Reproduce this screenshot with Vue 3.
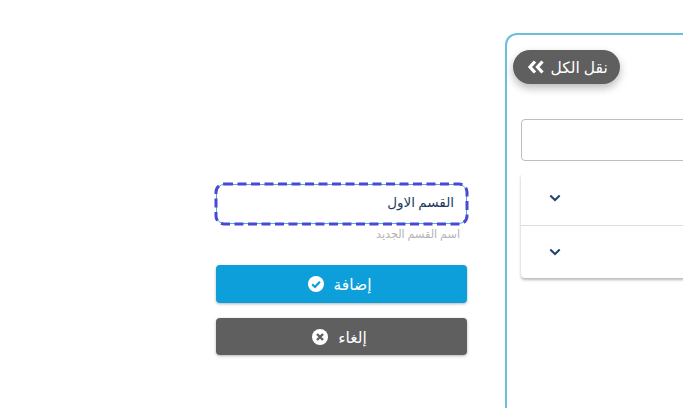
<script setup>
const items = [1, 2]
</script>

<template>
  <div class="page">
    <section class="form">
      <div class="name-field">
        <input class="name-input" dir="rtl" value="القسم الاول" aria-label="اسم القسم الجديد" />
        <svg class="focus-ring" viewBox="0 0 253 42" aria-hidden="true">
          <rect x="1" y="1" width="251" height="40" rx="8" fill="none" stroke="#4a48d4" stroke-width="3" stroke-dasharray="9 4.5" />
        </svg>
      </div>
      <p class="hint" dir="rtl">اسم القسم الجديد</p>
      <button class="btn primary" type="button">
        <svg class="btn-icon" viewBox="0 0 16 16" aria-hidden="true">
          <circle cx="8" cy="8" r="8" fill="#fff" />
          <path d="M4.2 8.2 7 11l4.9-5.2" fill="none" stroke="#0c9fda" stroke-width="2.2" />
        </svg>
        <span dir="rtl">إضافة</span>
      </button>
      <button class="btn secondary" type="button">
        <svg class="btn-icon" viewBox="0 0 16 16" aria-hidden="true">
          <circle cx="8" cy="8" r="8" fill="#fff" />
          <path d="M5 5l6 6M11 5l-6 6" fill="none" stroke="#5f5f5f" stroke-width="2.4" />
        </svg>
        <span dir="rtl">إلغاء</span>
      </button>
    </section>

    <section class="panel">
      <button class="move-all" type="button">
        <svg class="move-icon" viewBox="0 0 18 14" aria-hidden="true">
          <path d="M8 1.5 3 7l5 5.5M15.5 1.5 10.5 7l5 5.5" fill="none" stroke="#fff" stroke-width="3.2" />
        </svg>
        <span dir="rtl">نقل الكل</span>
      </button>
      <div class="search"></div>
      <div class="accordion">
        <div v-for="item in items" :key="item" class="row">
          <svg class="chevron" viewBox="0 0 12 8" aria-hidden="true">
            <path d="M1.3 1.5 6 6l4.7-4.5" fill="none" stroke="#1f4468" stroke-width="2" />
          </svg>
        </div>
      </div>
    </section>
  </div>
</template>

<style>
html, body { margin: 0; overflow: hidden; background: #fff; }
</style>

<style scoped>
.page {
  width: 683px;
  height: 408px;
  overflow: hidden;
  display: flex;
  align-items: flex-start;
  background: #fff;
  font-family: "Noto Sans", "DejaVu Sans", sans-serif;
}
.form {
  flex: 0 0 251px;
  margin-left: 216px;
  padding-top: 184px;
}
.name-field {
  position: relative;
  border-radius: 8px;
}
.focus-ring {
  position: absolute;
  top: -1px;
  left: -1px;
  width: 253px;
  height: 42px;
  overflow: visible;
  pointer-events: none;
}
.name-input {
  display: block;
  box-sizing: border-box;
  width: 100%;
  height: 40px;
  padding: 0 12px 4px;
  border: 1px solid #45b4dc;
  border-radius: 8px;
  background: #fff;
  color: #1f3a5f;
  font: 13.5px "Liberation Serif", "DejaVu Sans", serif;
  outline: none;
}
.hint {
  margin: 2px 7px 0 0;
  height: 15px;
  line-height: 15px;
  font-size: 11.2px;
  color: #b4b4b4;
}
.btn {
  display: flex;
  align-items: center;
  justify-content: center;
  gap: 10px;
  width: 100%;
  padding: 0 4px 0 0;
  border: 0;
  border-radius: 4px;
  color: #fff;
  font: 500 15.5px "Noto Sans", "DejaVu Sans", sans-serif;
  box-shadow: 0 1px 3px rgba(0, 0, 0, 0.3);
}
.primary { height: 38px; margin-top: 24px; background: #0c9fda; }
.secondary { height: 37px; margin-top: 15px; background: #5f5f5f; }
.btn-icon { width: 16px; height: 16px; }
.panel {
  position: relative;
  box-sizing: border-box;
  flex: 0 0 300px;
  height: 420px;
  margin: 33px 0 0 37.5px;
  padding: 84px 0 0 14.5px;
  border-style: solid;
  border-color: #6cbfdb;
  border-width: 2px 0 0 2px;
  border-radius: 12px 0 0 0;
}
.move-all {
  position: absolute;
  top: 15px;
  left: 6px;
  display: flex;
  align-items: center;
  gap: 6px;
  box-sizing: border-box;
  width: 107px;
  height: 34px;
  padding: 0 0 0 14px;
  border: 0;
  border-radius: 17px;
  background: #5f5f5f;
  color: #fff;
  font: 500 15.5px "Noto Sans", "DejaVu Sans", sans-serif;
  white-space: nowrap;
  box-shadow: 0 4px 9px rgba(0, 0, 0, 0.28);
}
.move-icon { width: 18px; height: 14px; flex: none; }
.search {
  box-sizing: border-box;
  height: 42px;
  border: 1px solid #bdbdbd;
  border-radius: 4px;
}
.accordion {
  margin-top: 12px;
  border-radius: 4px;
  background: #fff;
  box-shadow: 0 2px 3px rgba(0, 0, 0, 0.28);
}
.row {
  display: flex;
  align-items: center;
  box-sizing: border-box;
  height: 52px;
  padding: 0 0 2px 28px;
}
.row + .row { height: 53px; padding-bottom: 0; border-top: 1px solid #dedede; }
.chevron { width: 12px; height: 8px; }
</style>
